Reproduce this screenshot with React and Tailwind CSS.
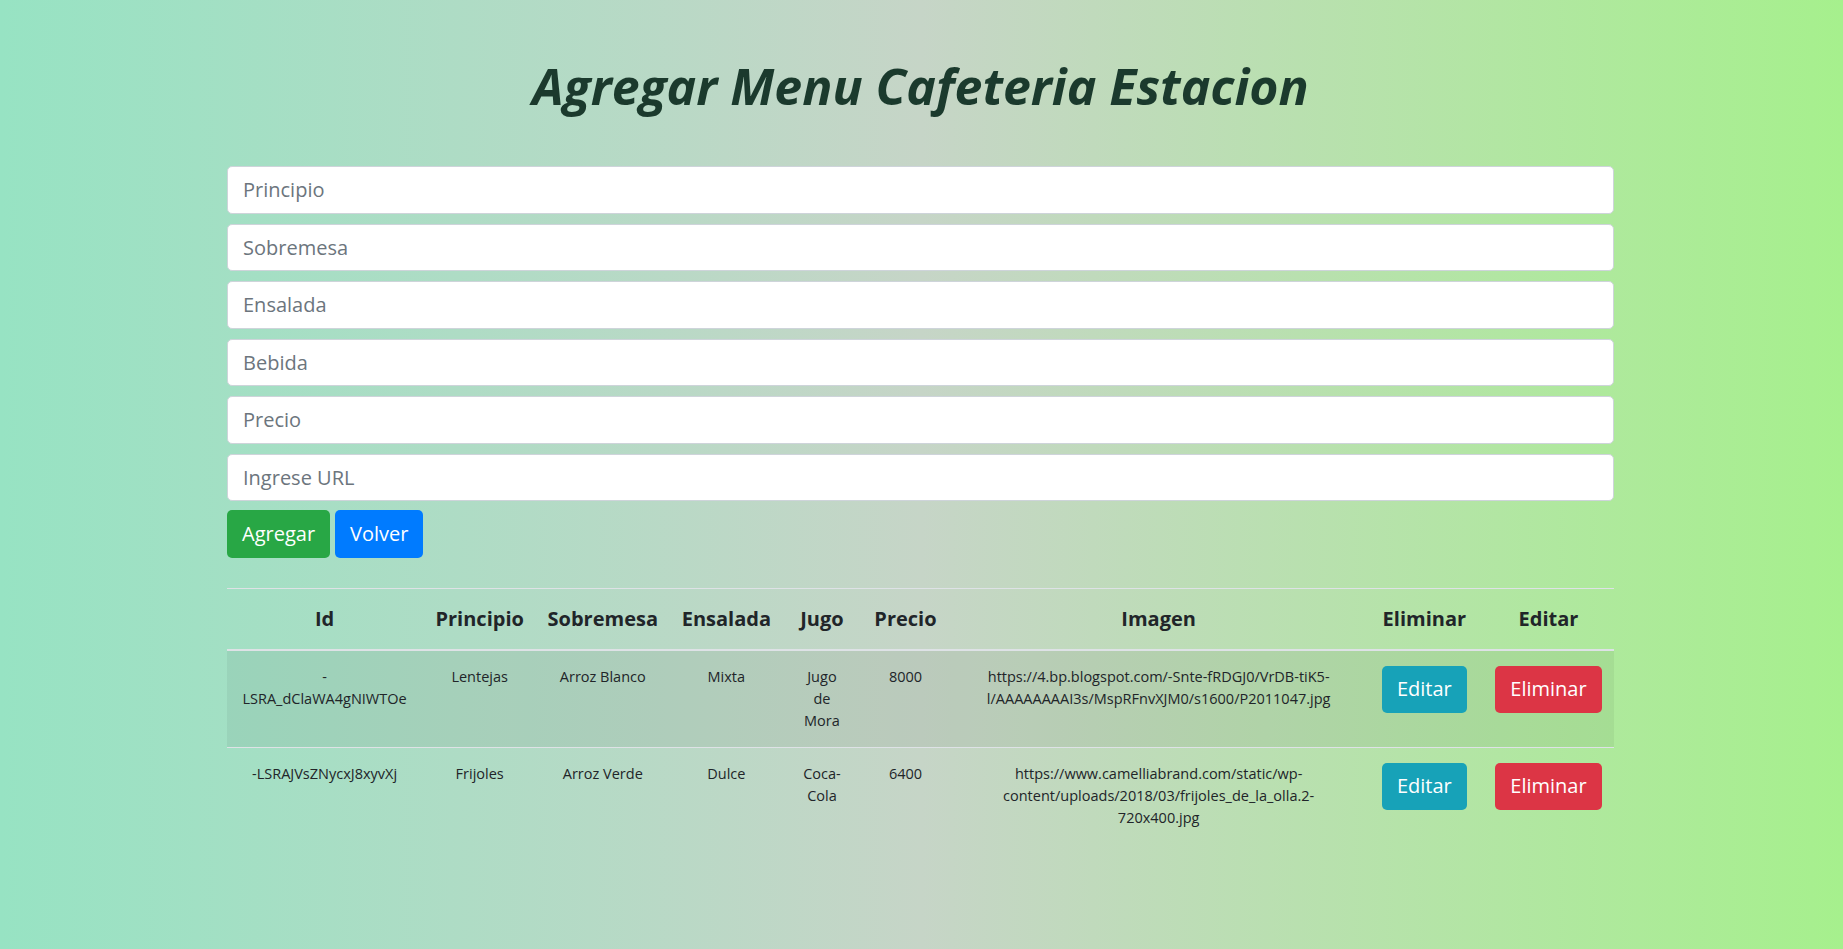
import React from "react";

const inputs = ["Principio", "Sobremesa", "Ensalada", "Bebida", "Precio", "Ingrese URL"];
const headers = ["Id", "Principio", "Sobremesa", "Ensalada", "Jugo", "Precio", "Imagen", "Eliminar", "Editar"];
const widths = ["w-[195px]", "w-[115px]", "w-[131px]", "w-[116px]", "w-[75px]", "w-[92px]", "w-[414px]", "w-[117px]", "w-[131px]"];

const rows = [
  {
    id: ["-", "LSRA_dClaWA4gNIWTOe"],
    principio: "Lentejas",
    sobremesa: "Arroz Blanco",
    ensalada: "Mixta",
    jugo: ["Jugo", "de", "Mora"],
    precio: "8000",
    imagen: ["https://4.bp.blogspot.com/-Snte-fRDGJ0/VrDB-tiK5-", "l/AAAAAAAAI3s/MspRFnvXJM0/s1600/P2011047.jpg"],
    striped: true,
  },
  {
    id: ["-LSRAJVsZNycxJ8xyvXj"],
    principio: "Frijoles",
    sobremesa: "Arroz Verde",
    ensalada: "Dulce",
    jugo: ["Coca-", "Cola"],
    precio: "6400",
    imagen: ["https://www.camelliabrand.com/static/wp-", "content/uploads/2018/03/frijoles_de_la_olla.2-", "720x400.jpg"],
    striped: false,
  },
];

function Lines({ items }) {
  return items.map((t, i) => (
    <span key={i} className="block">
      {t}
    </span>
  ));
}

export default function App() {
  return (
    <div
      className="min-h-screen w-full bg-[linear-gradient(to_right,#97e3c3,#c6d5c7,#a6f08d)] text-[#212529]"
      style={{ fontFamily: '"Open Sans", "Noto Sans", sans-serif' }}
    >
      <div className="ml-[227px] w-[1387px] pt-[56px] pb-[40px]">
        <h1 className="text-center text-[50px] leading-[60px] font-bold italic text-[#1b3a2d]">
          Agregar Menu Cafeteria Estacion
        </h1>

        <div className="mt-[50px] flex flex-col gap-[10px]">
          {inputs.map((p) => (
            <input
              key={p}
              type="text"
              placeholder={p}
              className="h-[47.5px] w-full rounded-[5px] border border-[#ced4da] bg-white px-[15px] text-[20px] text-[#495057] placeholder:text-[#6c757d] outline-none"
            />
          ))}
        </div>

        <div className="mt-[9px] flex gap-[5px]">
          <button className="h-[47.5px] rounded-[5px] bg-[#28a745] px-[15px] text-[20px] text-white">Agregar</button>
          <button className="h-[47.5px] rounded-[5px] bg-[#007bff] px-[15px] text-[20px] text-white">Volver</button>
        </div>

        <table className="mt-[30px] w-full table-fixed border-collapse">
          <colgroup>
            {widths.map((w, i) => (
              <col key={i} className={w} />
            ))}
          </colgroup>
          <thead>
            <tr>
              {headers.map((h) => (
                <th
                  key={h}
                  className="border-t border-b-2 border-t-[#dee2e6] border-b-[#dee2e6] px-[4px] py-[15px] text-center align-bottom text-[20px] leading-[30px] font-bold"
                >
                  {h}
                </th>
              ))}
            </tr>
          </thead>
          <tbody>
            {rows.map((r, i) => (
              <tr key={i} className={r.striped ? "bg-[rgba(0,0,0,0.05)]" : ""}>
                <td className="border-t border-[#dee2e6] px-[15px] py-[15px] text-center align-top text-[14.5px] leading-[22px]">
                  <Lines items={r.id} />
                </td>
                <td className="border-t border-[#dee2e6] px-[6px] py-[15px] text-center align-top text-[14.5px] leading-[22px]">
                  {r.principio}
                </td>
                <td className="border-t border-[#dee2e6] px-[6px] py-[15px] text-center align-top text-[14.5px] leading-[22px]">
                  {r.sobremesa}
                </td>
                <td className="border-t border-[#dee2e6] px-[6px] py-[15px] text-center align-top text-[14.5px] leading-[22px]">
                  {r.ensalada}
                </td>
                <td className="border-t border-[#dee2e6] px-[4px] py-[15px] text-center align-top text-[14.5px] leading-[22px]">
                  <Lines items={r.jugo} />
                </td>
                <td className="border-t border-[#dee2e6] px-[6px] py-[15px] text-center align-top text-[14.5px] leading-[22px]">
                  {r.precio}
                </td>
                <td className="border-t border-[#dee2e6] px-[4px] py-[15px] text-center align-top text-[14.5px] leading-[22px] whitespace-nowrap">
                  <Lines items={r.imagen} />
                </td>
                <td className="border-t border-[#dee2e6] px-[4px] py-[15px] text-center align-top">
                  <button className="h-[47.5px] rounded-[5px] bg-[#17a2b8] px-[15px] text-[20px] text-white">Editar</button>
                </td>
                <td className="border-t border-[#dee2e6] px-[4px] py-[15px] text-center align-top">
                  <button className="h-[47.5px] rounded-[5px] bg-[#dc3545] px-[15px] text-[20px] text-white">Eliminar</button>
                </td>
              </tr>
            ))}
          </tbody>
        </table>
      </div>
    </div>
  );
}
